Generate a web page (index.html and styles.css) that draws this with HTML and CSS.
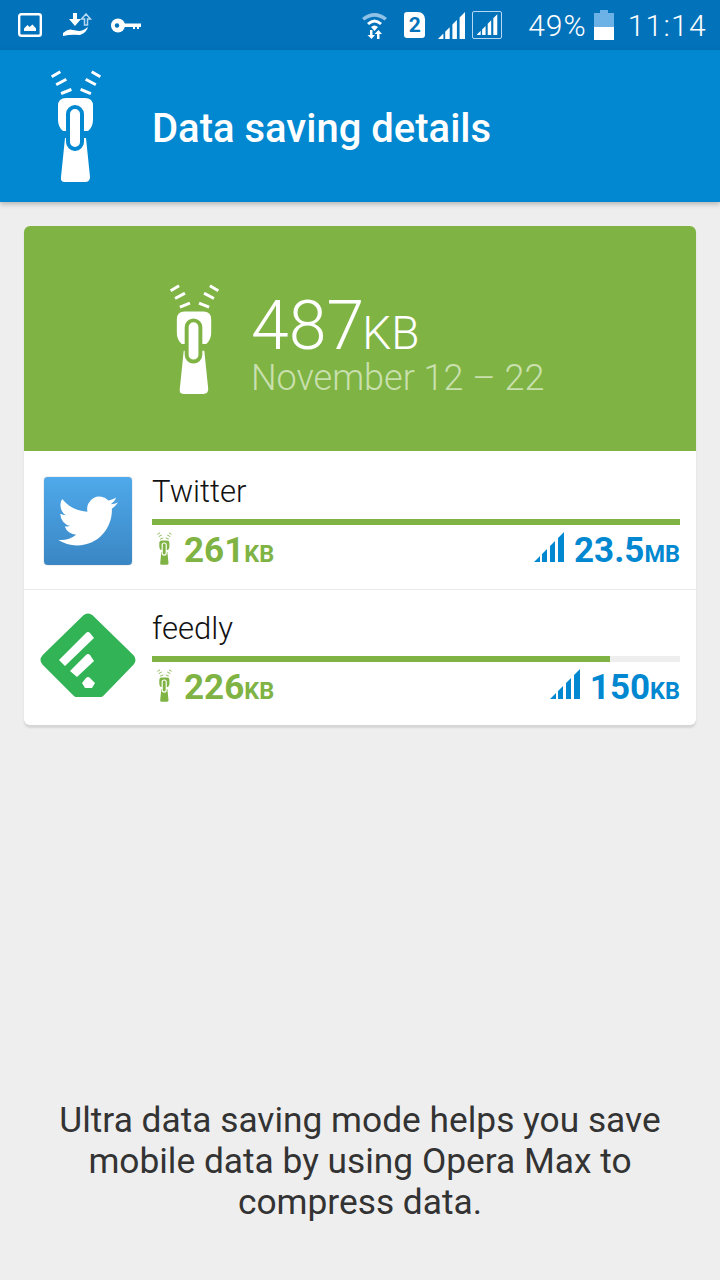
FILE: index.html
```html
<!DOCTYPE html>
<html lang="en">
<head>
  <meta charset="UTF-8">
  <title>Data saving details</title>
  <link rel="stylesheet" href="styles.css">
</head>
<body>
  <svg class="defs" width="0" height="0">
    <symbol id="zipper" viewBox="0 0 52 112">
      <path d="M3 6 9 2.500M7.500 14 15 10M12.500 23 20 20M49 6 43 2.500M44.500 14 37 10M39.500 23 32 20" fill="none" stroke="currentColor" stroke-width="3" stroke-linecap="square"/>
      <path d="M16 28H35Q43 28 43 36V50Q43 57 38 61H13Q8 57 8 50V36Q8 28 16 28Z" fill="currentColor"/>
      <path d="M15 68H36L40 107Q40 112 35 112H15Q10 112 11 107Z" fill="currentColor"/>
      <rect x="18" y="37" width="14" height="42" rx="7" fill="currentColor" stroke="var(--zip-line)" stroke-width="4"/>
    </symbol>
    <symbol id="bars" viewBox="0 0 30 30">
      <path d="M0 30 6 24V30ZM8 22 13 17V30H8ZM16 14 21 9V30H16ZM24 6 30 0V30H24Z" fill="currentColor"/>
    </symbol>
  </svg>

  <div class="status-bar">
    <div class="status-left">
      <svg class="st-image" viewBox="0 0 24 24"><rect x="1.200" y="1.200" width="21.600" height="21.600" rx="2" fill="none" stroke="#fff" stroke-width="2.400"/><path d="M6 18V15.500L9.500 12 11.500 14 14.500 11.500 18 15.500V18Z" fill="#fff"/></svg>
      <svg class="st-hand" viewBox="0 0 30 24"><path d="M0 23V20Q5 15 10 17L16 18Q20 18 25 14 24 19 17 22 8 21 0 23Z" fill="#fff"/><path d="M10 0H14V6H18L12 13 6 6H10Z" fill="#fff"/><path d="M21.500 12V6H18.500L23 1 27.500 6H24.500V12Z" fill="none" stroke="#b6d8f0" stroke-width="1.500"/></svg>
      <svg class="st-key" viewBox="0 0 30 15"><circle cx="7" cy="7.500" r="7" fill="#fff"/><circle cx="6" cy="7.500" r="2.200" fill="#0272ba"/><path d="M13 5.500H30V9H28V11H26V9H24V11H22V9H13Z" fill="#fff"/></svg>
    </div>
    <div class="status-right">
      <svg class="st-wifi" viewBox="0 0 27 28"><path d="M1 7Q13.500-3 26 7L23.500 9.500Q13.500 2 3.500 9.500Z" fill="#8fc2e6"/><path d="M6 12Q13.500 5 21 12L19 14Q13.500 9 8 14Z" fill="#fff"/><path d="M10 16Q13.500 13 17 16L13.500 20Z" fill="#fff"/><path d="M9 19V24H6.500L10.500 28 14 24H11.500V19ZM16 28V23H13.500L17.500 19 21 23H18.500V28Z" fill="#fff"/></svg>
      <div class="st-sim">2</div>
      <svg class="st-signal" viewBox="0 0 30 30"><use href="#bars"/></svg>
      <div class="st-boxed"><svg viewBox="0 0 30 30"><use href="#bars"/></svg></div>
      <span class="st-pct">49%</span>
      <div class="st-battery"><div class="st-battery-cap"></div><div class="st-battery-body"><div class="st-battery-level"></div></div></div>
      <span class="st-time">11:14</span>
    </div>
  </div>

  <header class="app-bar">
    <svg class="app-bar-icon"><use href="#zipper"/></svg>
    <h1 class="app-bar-title">Data saving details</h1>
  </header>

  <main class="content">
    <section class="card">
      <div class="summary">
        <svg class="summary-icon"><use href="#zipper"/></svg>
        <div class="summary-text">
          <div class="summary-total">487<span class="summary-unit">KB</span></div>
          <div class="summary-date">November 12 – 22</div>
        </div>
      </div>

      <div class="app-row row-twitter">
        <div class="app-logo">
          <div class="twitter-logo">
            <svg viewBox="0 0 24 24"><path d="M23.953 4.570a10 10 0 01-2.825.775 4.958 4.958 0 002.163-2.723c-.951.555-2.005.959-3.127 1.184a4.920 4.920 0 00-8.384 4.482C7.690 8.095 4.067 6.130 1.640 3.162a4.822 4.822 0 00-.666 2.475c0 1.710.870 3.213 2.188 4.096a4.904 4.904 0 01-2.228-.616v.060a4.923 4.923 0 003.946 4.827 4.996 4.996 0 01-2.212.085 4.936 4.936 0 004.604 3.417 9.867 9.867 0 01-6.102 2.105c-.390 0-.779-.023-1.170-.067a13.995 13.995 0 007.557 2.209c9.053 0 13.998-7.496 13.998-13.985 0-.210 0-.420-.015-.630A9.935 9.935 0 0024 4.590z" fill="#fff"/></svg>
          </div>
        </div>
        <div class="app-info">
          <div class="app-name">Twitter</div>
          <div class="bar"><div class="bar-fill" style="width: 100%"></div></div>
          <div class="app-stats">
            <div class="stat stat-saved"><svg class="stat-zip"><use href="#zipper"/></svg><span class="stat-num">261</span><span class="stat-unit">KB</span></div>
            <div class="stat stat-used"><svg class="stat-bars"><use href="#bars"/></svg><span class="stat-num">23.5</span><span class="stat-unit">MB</span></div>
          </div>
        </div>
      </div>

      <div class="app-row row-feedly">
        <div class="app-logo">
          <svg class="feedly-logo" viewBox="0 0 96 84">
            <path d="M48 7 89 47 59 78H38L7 47Z" fill="#31b356" stroke="#31b356" stroke-width="13" stroke-linejoin="round"/>
            <path d="M19 47 46 20Q48 18 50 20L54 25 25 53ZM30 58 46 42Q48 40 50 42L54 48 37 64ZM42 70 46 65Q48 63 50 65L55 70 52 75H45Z" fill="#fff"/>
          </svg>
        </div>
        <div class="app-info">
          <div class="app-name">feedly</div>
          <div class="bar"><div class="bar-fill" style="width: 86.700%"></div></div>
          <div class="app-stats">
            <div class="stat stat-saved"><svg class="stat-zip"><use href="#zipper"/></svg><span class="stat-num">226</span><span class="stat-unit">KB</span></div>
            <div class="stat stat-used"><svg class="stat-bars"><use href="#bars"/></svg><span class="stat-num">150</span><span class="stat-unit">KB</span></div>
          </div>
        </div>
      </div>
    </section>
  </main>

  <p class="footer-note">Ultra data saving mode helps you save mobile data by using Opera Max to compress data.</p>
</body>
</html>
```

FILE: styles.css
```css
html, body {
  margin: 0;
  height: 100%;
}
body {
  display: flex;
  flex-direction: column;
  height: 1280px;
  overflow: hidden;
  background-color: #eeeeee;
  font-family: Roboto, sans-serif;
}
.defs {
  position: absolute;
}

/* status bar */
.status-bar {
  display: flex;
  justify-content: space-between;
  align-items: center;
  height: 50px;
  padding: 0 13px 0 18px;
  background-color: #0272ba;
  color: #fff;
}
.status-left, .status-right {
  display: flex;
  align-items: center;
}
.st-image {
  width: 24px;
  height: 24px;
}
.st-hand {
  width: 30px;
  height: 24px;
  margin-left: 21px;
}
.st-key {
  width: 30px;
  height: 15px;
  margin-left: 18px;
}
.st-wifi {
  width: 27px;
  height: 28px;
}
.st-sim {
  width: 21px;
  height: 26px;
  margin-left: 16px;
  border-radius: 3px 7px 3px 3px;
  background-color: #fff;
  color: #0272ba;
  font-size: 21px;
  font-weight: 700;
  line-height: 26px;
  text-align: center;
}
.st-signal {
  width: 27px;
  height: 27px;
  margin-left: 13px;
}
.st-boxed {
  display: flex;
  align-items: flex-end;
  justify-content: center;
  box-sizing: border-box;
  width: 30px;
  height: 28px;
  margin-left: 7px;
  padding: 3px;
  border: 1px solid #b6d8f0;
  border-radius: 2px;
}
.st-boxed svg {
  width: 22px;
  height: 21px;
}
.st-pct {
  margin-left: 26px;
  font-size: 30px;
  font-weight: 300;
  letter-spacing: 1px;
}
.st-battery {
  width: 20px;
  margin-left: 7px;
}
.st-battery-cap {
  width: 8px;
  height: 3px;
  margin: 0 auto;
  background-color: #6cb2e6;
}
.st-battery-body {
  display: flex;
  align-items: flex-end;
  height: 27px;
  background-color: #6cb2e6;
}
.st-battery-level {
  width: 100%;
  height: 13px;
  background-color: #fff;
}
.st-time {
  margin-left: 14px;
  font-size: 30px;
  font-weight: 300;
  letter-spacing: 1.300px;
}

/* app bar */
.app-bar {
  display: flex;
  align-items: center;
  height: 152px;
  background-color: #0288d1;
  box-shadow: 0 2px 5px rgba(0, 0, 0, 0.25);
  color: #fff;
  --zip-line: #0288d1;
}
.app-bar-icon {
  width: 52px;
  height: 112px;
  margin-left: 50px;
}
.app-bar-title {
  margin: 4px 0 0 50px;
  font-size: 40px;
  font-weight: 500;
}

/* card */
.content {
  flex: 1;
  padding: 24px 24px 0;
}
.card {
  border-radius: 6px;
  overflow: hidden;
  background: #fff;
  box-shadow: 0 3px 2px rgba(0, 0, 0, 0.1);
}
.summary {
  display: flex;
  align-items: center;
  height: 225px;
  background-color: #7fb344;
  color: #fff;
  --zip-line: #7fb344;
}
.summary-icon {
  width: 51px;
  height: 110px;
  margin: 0 31px 0 145px;
}
.summary-text {
  margin-top: 22px;
}
.summary-total {
  font-size: 68px;
  font-weight: 300;
  line-height: 50px;
}
.summary-unit {
  margin-left: -2px;
  font-size: 46px;
}
.summary-date {
  color: #c9e0ae;
  font-size: 36px;
  font-weight: 300;
  line-height: 40px;
}

.app-row {
  display: flex;
  box-sizing: border-box;
  padding: 0 16px 0 0;
}
.row-twitter {
  height: 139px;
  border-bottom: 1px solid #ececec;
}
.row-feedly {
  height: 135px;
}
.app-logo {
  display: flex;
  align-items: center;
  justify-content: center;
  flex: none;
  width: 128px;
}
.twitter-logo {
  display: flex;
  align-items: center;
  justify-content: center;
  width: 88px;
  height: 88px;
  margin-top: 2px;
  border-radius: 4px;
  background: linear-gradient(#4fa9ea, #3a86c4);
  box-shadow: 0 0 1px rgba(0, 0, 0, 0.6);
}
.twitter-logo svg {
  width: 60px;
  height: 60px;
}
.feedly-logo {
  width: 96px;
  height: 84px;
  margin-top: -6px;
}
.app-info {
  flex: 1;
  padding-top: 21px;
}
.row-feedly .app-info {
  padding-top: 19px;
}
.app-name {
  color: #111;
  font-size: 31px;
  font-weight: 300;
  line-height: 40px;
}
.bar {
  height: 6px;
  margin-top: 7px;
  background-color: #eeeeee;
}
.bar-fill {
  height: 100%;
  background-color: #7fb344;
}
.app-stats {
  display: flex;
  justify-content: space-between;
  align-items: center;
  margin-top: 7px;
}
.stat {
  display: flex;
  align-items: baseline;
  line-height: 38px;
}
.stat-saved {
  color: #7fb344;
  --zip-line: #fff;
}
.stat-used {
  color: #0288d1;
}
.stat-num {
  font-size: 35px;
  font-weight: 700;
}
.stat-unit {
  font-size: 23.500px;
  font-weight: 700;
}
.stat-zip {
  align-self: flex-start;
  width: 15px;
  height: 33px;
  margin: 0 12px 0 5px;
}
.stat-bars {
  width: 30px;
  height: 30px;
  margin-right: 10px;
}

.footer-note {
  margin: 0;
  padding: 0 48px 57px;
  color: #333333;
  font-size: 35.300px;
  line-height: 41px;
  text-align: center;
}
```
